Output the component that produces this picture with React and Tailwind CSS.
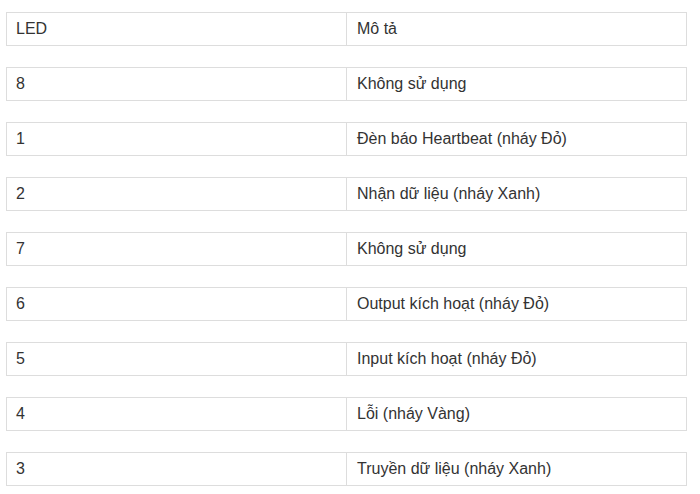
const rows = [
  ['LED', 'Mô tả'],
  ['8', 'Không sử dụng'],
  ['1', 'Đèn báo Heartbeat (nháy Đỏ)'],
  ['2', 'Nhận dữ liệu (nháy Xanh)'],
  ['7', 'Không sử dụng'],
  ['6', 'Output kích hoạt (nháy Đỏ)'],
  ['5', 'Input kích hoạt (nháy Đỏ)'],
  ['4', 'Lỗi (nháy Vàng)'],
  ['3', 'Truyền dữ liệu (nháy Xanh)'],
]

export default function App() {
  return (
    <div className="min-h-[494px] bg-white pt-[12px] pl-[6px] font-['Liberation_Sans',Arial,sans-serif] text-[16px] leading-[24px] text-[#333]">
      <div className="flex w-[681px] flex-col gap-[21px]">
        {rows.map(([led, desc], i) => (
          <div key={i} className="grid grid-cols-[340px_1fr] border border-[#ddd]">
            <div className="border-r border-[#ddd] px-[9px] py-[4px]">{led}</div>
            <div className="px-[10px] py-[4px]">{desc}</div>
          </div>
        ))}
      </div>
    </div>
  )
}
